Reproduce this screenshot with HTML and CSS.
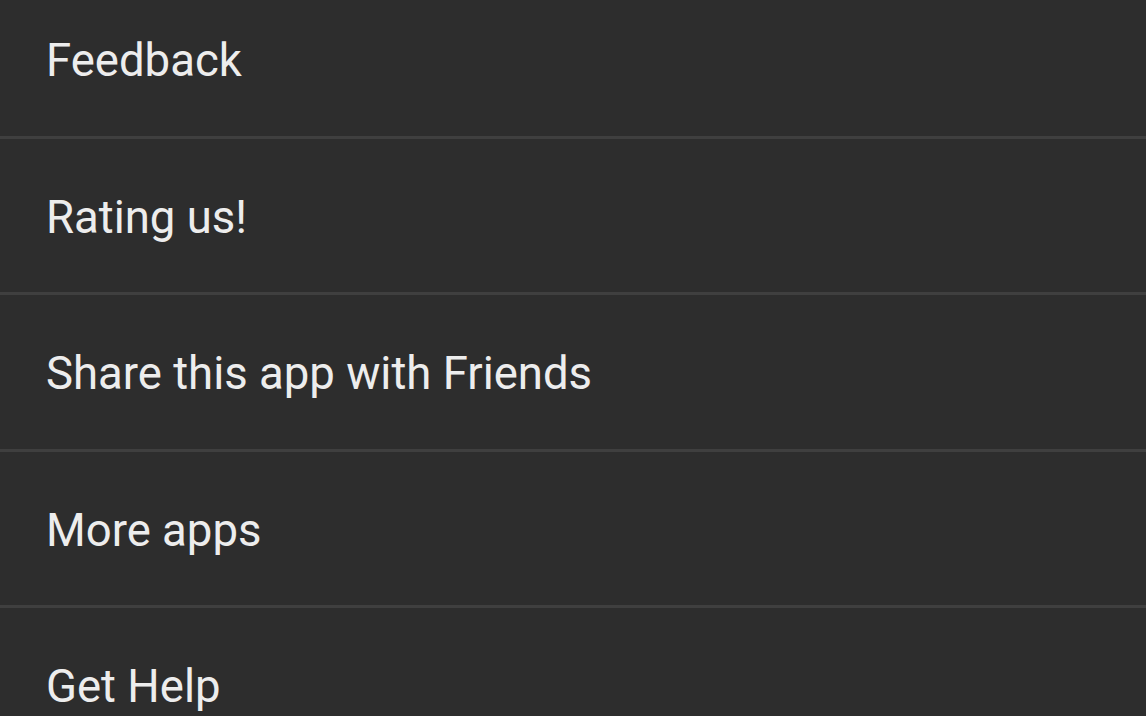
FILE: index.html
```html
<!DOCTYPE html>
<html>
<head>
<meta charset="utf-8">
<link rel="stylesheet" href="styles.css">
</head>
<body>
<ul class="menu">
  <li class="item">Feedback</li>
  <li class="item">Rating us!</li>
  <li class="item">Share this app with Friends</li>
  <li class="item">More apps</li>
  <li class="item">Get Help</li>
</ul>
</body>
</html>
```

FILE: styles.css
```css
html, body {
  margin: 0;
  padding: 0;
  height: 100%;
  overflow: hidden;
  background: #2d2d2d;
}
.menu {
  list-style: none;
  margin: -18px 0 0 0;
  padding: 0;
}
.item {
  box-sizing: border-box;
  height: 156.5px;
  padding: 4px 0 0 46px;
  border-bottom: 3px solid #3f3f3f;
  display: flex;
  align-items: center;
  font-family: Roboto, "Noto Sans", sans-serif;
  font-size: 45.5px;
  color: #ededed;
}
```
